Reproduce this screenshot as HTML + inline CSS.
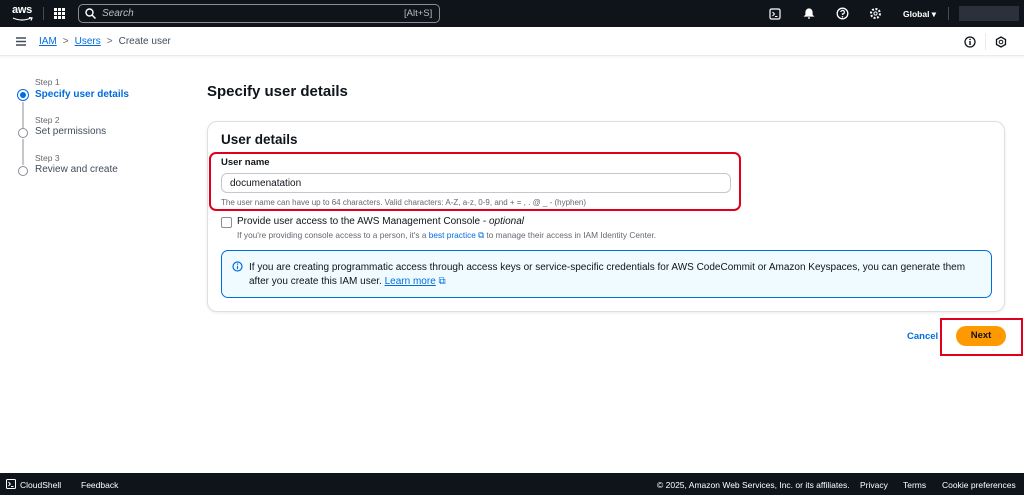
<!DOCTYPE html>
<html><head><meta charset="utf-8"><style>
*{box-sizing:border-box;margin:0;padding:0}
body{width:1024px;height:495px;overflow:hidden;background:#fff;font-family:"Liberation Sans",sans-serif;color:#0f141a;position:relative}
.abs{position:absolute}
.top{left:0;top:0;width:1024px;height:27px;background:#0f141a}
.crumb{left:0;top:27px;width:1024px;height:29px;background:#fff;border-bottom:1px solid #e9ebed;box-shadow:0 1px 2px rgba(0,0,0,.06)}
.foot{left:0;top:473px;width:1024px;height:22px;background:#0f141a;color:#fff;font-size:8.5px}
.link{color:#006ce0}
</style></head><body>
<div class="abs top">
  <div class="abs" style="left:12px;top:4px;color:#fff;font-size:11px;font-weight:bold;letter-spacing:-.3px">aws</div>
  <svg class="abs" style="left:12px;top:17px" width="22" height="5"><path d="M1 1 Q10 5 19 1 M17 0.5 L20 1 L19 3.5" stroke="#fff" fill="none" stroke-width="1.2"/></svg>
  <div class="abs" style="left:43px;top:7px;width:1px;height:13px;background:#414d5c"></div>
  <svg class="abs" style="left:54px;top:8px" width="11" height="11" fill="#fff"><rect x="0" y="0" width="3" height="3"/><rect x="4" y="0" width="3" height="3"/><rect x="8" y="0" width="3" height="3"/><rect x="0" y="4" width="3" height="3"/><rect x="4" y="4" width="3" height="3"/><rect x="8" y="4" width="3" height="3"/><rect x="0" y="8" width="3" height="3"/><rect x="4" y="8" width="3" height="3"/><rect x="8" y="8" width="3" height="3"/></svg>
  <div class="abs" style="left:78px;top:4px;width:362px;height:19px;border:1px solid #8c8c94;border-radius:5px"></div>
  <svg class="abs" style="left:85px;top:8px" width="11" height="11"><circle cx="4.5" cy="4.5" r="3.5" stroke="#fff" fill="none" stroke-width="1.4"/><path d="M7 7 L10.5 10.5" stroke="#fff" stroke-width="1.5"/></svg>
  <div class="abs" style="left:102px;top:8px;color:#b6bec9;font-size:10px;font-style:italic">Search</div>
  <div class="abs" style="left:404px;top:8px;color:#b6bec9;font-size:9.5px">[Alt+S]</div>
  <svg class="abs" style="left:769px;top:8px" width="12" height="12"><rect x="1" y="1" width="10" height="10" rx="1.5" stroke="#fff" fill="none" stroke-width="1.2"/><path d="M3.5 4 L5.5 6 L3.5 8 M6 8.5 H8.5" stroke="#fff" fill="none"/></svg>
  <svg class="abs" style="left:803px;top:7px" width="12" height="13"><path d="M2 9 L3 8 V5 A3 3 0 0 1 9 5 V8 L10 9 Z M5 11 H7" stroke="#fff" fill="#fff" stroke-width="1.2"/></svg>
  <svg class="abs" style="left:836px;top:7px" width="13" height="13"><circle cx="6.5" cy="6.5" r="5.3" stroke="#fff" fill="none" stroke-width="1.3"/><path d="M4.8 5 A1.8 1.8 0 1 1 6.5 7 V8" stroke="#fff" fill="none" stroke-width="1.2"/><circle cx="6.5" cy="9.8" r=".8" fill="#fff"/></svg>
  <svg class="abs" style="left:869px;top:7px" width="13" height="13"><circle cx="6.5" cy="6.5" r="4.5" stroke="#fff" fill="none" stroke-width="2" stroke-dasharray="2 1.5"/><circle cx="6.5" cy="6.5" r="1.6" stroke="#fff" fill="none"/></svg>
  <div class="abs" style="left:903px;top:9px;color:#fff;font-size:8.5px;font-weight:bold">Global ▾</div>
  <div class="abs" style="left:948px;top:7px;width:1px;height:13px;background:#414d5c"></div>
  <div class="abs" style="left:959px;top:6px;width:60px;height:15px;background:#2a313b"></div>
</div>
<div class="abs crumb">
  <svg class="abs" style="left:16px;top:10px" width="10" height="9"><path d="M0 1H10M0 4.5H10M0 8H10" stroke="#414d5c" stroke-width="1.4"/></svg>
  <div class="abs" style="left:39px;top:9px;font-size:10px"><span class="link" style="text-decoration:underline">IAM</span><span style="color:#656871;margin:0 6px">&gt;</span><span class="link" style="text-decoration:underline">Users</span><span style="color:#656871;margin:0 6px">&gt;</span><span style="color:#414d5c">Create user</span></div>
  <svg class="abs" style="left:964px;top:9px" width="12" height="12"><circle cx="6" cy="6" r="5" stroke="#0f141a" fill="none" stroke-width="1.3"/><path d="M6 5V9" stroke="#0f141a" stroke-width="1.4"/><circle cx="6" cy="3.4" r=".8"/></svg>
  <div class="abs" style="left:985px;top:6px;width:1px;height:17px;background:#e9ebed"></div>
  <svg class="abs" style="left:995px;top:9px" width="12" height="12"><path d="M6 1 L10.5 3.5 V8.5 L6 11 L1.5 8.5 V3.5 Z" stroke="#0f141a" fill="none" stroke-width="1.3"/><circle cx="6" cy="6" r="1.8" stroke="#0f141a" fill="none"/></svg>
</div>

<div class="abs" style="left:35px;top:77px;font-size:8.5px;color:#656871">Step 1</div>
<div class="abs" style="left:17px;top:89px;width:12px;height:12px;border:1.5px solid #006ce0;border-radius:50%"><div style="margin:1.5px;width:6px;height:6px;border-radius:50%;background:#006ce0"></div></div>
<div class="abs" style="left:35px;top:89px;font-size:10px;font-weight:bold;color:#006ce0">Specify user details</div>
<div class="abs" style="left:22px;top:102px;width:1.5px;height:26px;background:#c6c6cd"></div>
<div class="abs" style="left:35px;top:115px;font-size:8.5px;color:#656871">Step 2</div>
<div class="abs" style="left:18px;top:128px;width:10px;height:10px;border:1.3px solid #8c8c94;border-radius:50%"></div>
<div class="abs" style="left:35px;top:126px;font-size:10px;color:#414d5c">Set permissions</div>
<div class="abs" style="left:22px;top:139px;width:1.5px;height:26px;background:#c6c6cd"></div>
<div class="abs" style="left:35px;top:153px;font-size:8.5px;color:#656871">Step 3</div>
<div class="abs" style="left:18px;top:166px;width:10px;height:10px;border:1.3px solid #8c8c94;border-radius:50%"></div>
<div class="abs" style="left:35px;top:164px;font-size:10px;color:#414d5c">Review and create</div>

<div class="abs" style="left:207px;top:83px;font-size:15px;font-weight:bold">Specify user details</div>
<div class="abs" style="left:207px;top:121px;width:798px;height:191px;border:1px solid #dedee3;border-radius:10px;box-shadow:0 1px 3px rgba(0,0,0,.08)"></div>
<div class="abs" style="left:221px;top:132px;font-size:13.5px;font-weight:bold">User details</div>
<div class="abs" style="left:209px;top:152px;width:532px;height:59px;border:2.5px solid #e0001b;border-radius:7px"></div>
<div class="abs" style="left:221px;top:157px;font-size:9.5px;font-weight:bold">User name</div>
<div class="abs" style="left:221px;top:173px;width:510px;height:20px;border:1px solid #c6c6cd;border-radius:6px;font-size:10px;padding:4px 0 0 8px">documenatation</div>
<div class="abs" style="left:221px;top:198px;font-size:8px;color:#656871">The user name can have up to 64 characters. Valid characters: A-Z, a-z, 0-9, and + = , . @ _ - (hyphen)</div>
<div class="abs" style="left:221px;top:217px;width:11px;height:11px;border:1.3px solid #8c8c94;border-radius:2px"></div>
<div class="abs" style="left:237px;top:216px;font-size:10px">Provide user access to the AWS Management Console - <i>optional</i></div>
<div class="abs" style="left:237px;top:230px;font-size:8.3px;color:#656871">If you're providing console access to a person, it's a <span class="link">best practice ⧉</span> to manage their access in IAM Identity Center.</div>
<div class="abs" style="left:221px;top:250px;width:771px;height:48px;background:#f0fbff;border:1.3px solid #006ce0;border-radius:7px"></div>
<svg class="abs" style="left:232px;top:261px" width="11" height="11"><circle cx="5.5" cy="5.5" r="4.5" stroke="#006ce0" fill="none" stroke-width="1.2"/><path d="M5.5 4.8V8.2" stroke="#006ce0" stroke-width="1.2"/><circle cx="5.5" cy="3.1" r=".7" fill="#006ce0"/></svg>
<div class="abs" style="left:249px;top:261px;font-size:10px;line-height:14px;width:735px">If you are creating programmatic access through access keys or service-specific credentials for AWS CodeCommit or Amazon Keyspaces, you can generate them after you create this IAM user. <span class="link" style="text-decoration:underline">Learn more</span> <span class="link">⧉</span></div>

<div class="abs" style="left:907px;top:331px;font-size:9.5px;font-weight:bold;color:#006ce0">Cancel</div>
<div class="abs" style="left:940px;top:318px;width:83px;height:38px;border:2.5px solid #e0001b"></div>
<div class="abs" style="left:956px;top:326px;width:50px;height:20px;background:#ff9900;border-radius:10px;font-size:9.5px;font-weight:bold;text-align:center;line-height:20px">Next</div>

<div class="abs foot">
  <svg class="abs" style="left:6px;top:6px" width="10" height="10"><rect x=".5" y=".5" width="9" height="9" rx="1" stroke="#fff" fill="none"/><path d="M2.5 3L4.3 5L2.5 7M5 7.5H7.5" stroke="#fff" fill="none"/></svg>
  <div class="abs" style="left:20px;top:7px">CloudShell</div>
  <div class="abs" style="left:81px;top:7px">Feedback</div>
  <div class="abs" style="left:657px;top:7px">© 2025, Amazon Web Services, Inc. or its affiliates.</div>
  <div class="abs" style="left:860px;top:7px">Privacy</div>
  <div class="abs" style="left:903px;top:7px">Terms</div>
  <div class="abs" style="left:942px;top:7px">Cookie preferences</div>
</div>
</body></html>
